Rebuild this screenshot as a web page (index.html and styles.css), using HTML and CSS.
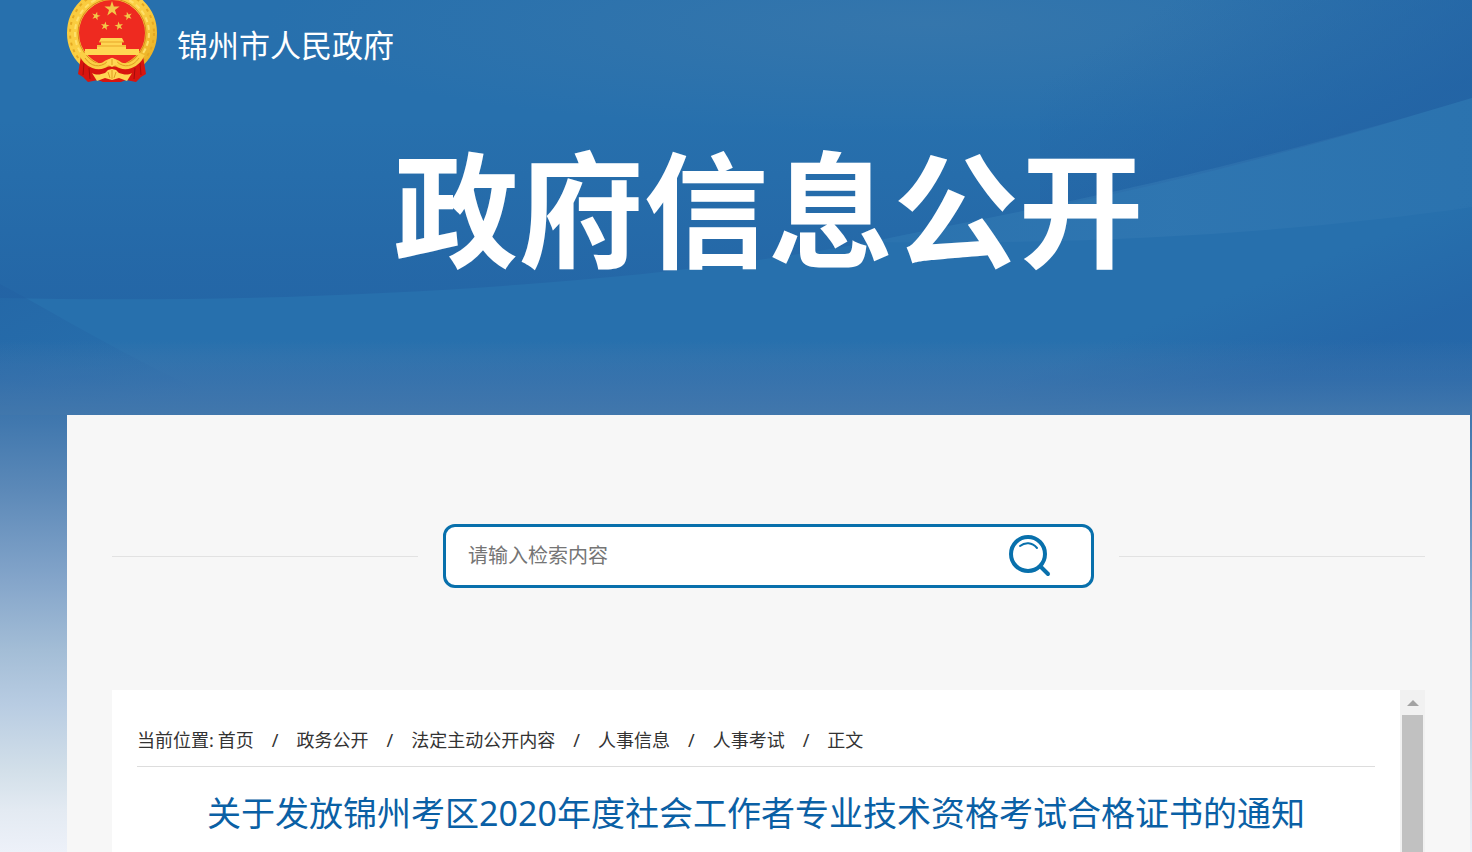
FILE: index.html
```html
<!DOCTYPE html>
<html lang="zh-CN">
<head>
<meta charset="utf-8">
<title>锦州市人民政府 - 政府信息公开</title>
<link rel="stylesheet" href="styles.css">
</head>
<body>

<!-- background waves -->
<svg class="waves" viewBox="0 0 1472 415" preserveAspectRatio="none" aria-hidden="true">
	<defs>
		<linearGradient id="upper" x1="0" y1="0" x2="0" y2="1">
			<stop offset="0.4" stop-color="#2260a2" stop-opacity="0"/>
			<stop offset="1" stop-color="#2260a2" stop-opacity="0.6"/>
		</linearGradient>
		<linearGradient id="corner" gradientUnits="userSpaceOnUse" x1="1170" y1="0" x2="1290" y2="190">
			<stop offset="0" stop-color="#2260a2" stop-opacity="0"/>
			<stop offset="1" stop-color="#2260a2" stop-opacity="0.7"/>
		</linearGradient>
		<radialGradient id="glow" cx="0.63" cy="0.1" r="0.45">
			<stop offset="0" stop-color="#3576ac"/>
			<stop offset="1" stop-color="#3576ac" stop-opacity="0"/>
		</radialGradient>
		<linearGradient id="band" x1="0" y1="0" x2="1" y2="0">
			<stop offset="0" stop-color="#3a7eb6" stop-opacity="0.2"/>
			<stop offset="0.5" stop-color="#3a7eb6" stop-opacity="0.4"/>
			<stop offset="1" stop-color="#3a7eb6" stop-opacity="0.2"/>
		</linearGradient>
		<linearGradient id="left" x1="0" y1="0" x2="1" y2="1">
			<stop offset="0" stop-color="#2260a2" stop-opacity="0.5"/>
			<stop offset="0.8" stop-color="#2260a2" stop-opacity="0"/>
		</linearGradient>
		<linearGradient id="right" gradientUnits="userSpaceOnUse" x1="1330" y1="255" x2="1365" y2="345">
			<stop offset="0" stop-color="#2361a5" stop-opacity="0"/>
			<stop offset="1" stop-color="#2361a5" stop-opacity="0.6"/>
		</linearGradient>
		<linearGradient id="mist" x1="0" y1="0" x2="0" y2="1">
			<stop offset="0" stop-color="#4177ac" stop-opacity="0"/>
			<stop offset="0.5" stop-color="#3a72ac" stop-opacity="0.5"/>
			<stop offset="1" stop-color="#4177ac"/>
		</linearGradient>
	</defs>
	<path fill="url(#upper)" d="M0 0H1472V98C1200 180 1000 215 870 242C640 285 300 305 0 298Z"/>
	<rect fill="url(#glow)" width="1472" height="240"/>
	<path fill="url(#corner)" d="M1040 0H1472V98C1300 150 1180 182 1040 209Z"/>
	<path fill="url(#band)" d="M1472 98C1200 180 1000 215 870 242C1100 245 1300 232 1472 207Z"/>
	<path fill="url(#left)" d="M0 284L26 298C100 340 180 385 260 415H0Z"/>
	<path fill="url(#right)" d="M1472 200V415H700V380Z"/>
	<rect fill="url(#mist)" y="340" width="1472" height="75"/>
</svg>

<div class="header">
	<svg class="emblem" viewBox="0 0 90 84" role="img" aria-label="国徽">
		<defs>
			<linearGradient id="gold" x1="0" y1="0" x2="1" y2="1">
				<stop offset="0" stop-color="#f9c93c"/>
				<stop offset="0.5" stop-color="#fbd045"/>
				<stop offset="1" stop-color="#e8ab20"/>
			</linearGradient>
			<path id="star" d="M0-10L2.3-3.1H9.5L3.7 1.2L5.9 8.1L0 3.8L-5.9 8.1L-3.7 1.2L-9.5-3.1H-2.3Z"/>
		</defs>
		<!-- wheat ring -->
		<circle cx="45" cy="33" r="39" fill="#ee2a20" stroke="url(#gold)" stroke-width="12"/>
		<circle cx="45" cy="33" r="42" fill="none" stroke="#e5a922" stroke-width="2" stroke-dasharray="3 4"/>
		<circle cx="45" cy="33" r="37" fill="none" stroke="#ffe069" stroke-width="2" stroke-dasharray="5 3"/>
		<circle cx="45" cy="33" r="34" fill="none" stroke="#d98c1d" stroke-width="1"/>
		<g fill="#f3c848">
			<use href="#star" transform="translate(45 9) scale(.8)"/>
			<use href="#star" transform="translate(29 16) rotate(15) scale(.45)"/>
			<use href="#star" transform="translate(61 16) rotate(-15) scale(.45)"/>
			<use href="#star" transform="translate(38 26) rotate(10) scale(.45)"/>
			<use href="#star" transform="translate(52 26) rotate(-10) scale(.45)"/>
		</g>
		<!-- gate -->
		<path fill="#ffd653" d="M34 38H55L57 42H55V45H59V49H72V55H18V49H30V45H34V42H32Z"/>
		<path stroke="#e8a52a" stroke-width="1" d="M32 42H57M30 46H59"/>
		<!-- ribbons -->
		<path fill="#d8150f" d="M14 56L11 74L16 77L21 82L31 80L36 82H54L59 80L69 82L74 77L79 74L76 56C70 66 60 70 54 68L45 66L36 68C30 70 20 66 14 56Z"/>
		<path fill="none" stroke="#a50d0b" stroke-width="1" d="M17 63L16 75M22 68L23 79M73 63L74 75M68 68L67 79"/>
		<!-- drapery and gear -->
		<path fill="none" stroke="#fbcf45" stroke-width="6" d="M15 54C20 65 32 70 40 63L45 61L50 63C58 70 70 65 75 54"/>
		<path fill="none" stroke="#e09c20" stroke-width="1" d="M18 58C24 67 33 68 40 62M72 58C66 67 57 68 50 62"/>
		<path fill="#ffd653" d="M25 73C30 76 34 74 38 73L41 70L45 69L49 70L52 73C56 74 60 76 65 73L60 81L52 78L45 80L38 78L30 81Z"/>
		<path fill="#ffd653" d="M39 64L41 60L45 58L49 60L51 64L45 67Z"/>
		<path fill="none" stroke="#e09c20" stroke-width="1" d="M45 59V65M45 70V79M41 72L43 78M49 72L47 78"/>
	</svg>
	<a href="#" class="site-name">锦州市人民政府</a>
</div>

<h1>政府信息公开</h1>

<div class="main">
	<form class="search">
		<span class="line"></span>
		<div class="search-box">
			<input type="text" id="keyword" placeholder="请输入检索内容" aria-label="请输入检索内容">
			<button type="button" aria-label="检索">
				<svg width="42" height="42" viewBox="0 0 42 42" fill="none" stroke="#0870ac" stroke-linecap="round">
					<circle cx="19" cy="19" r="17" stroke-width="4"/>
					<path stroke-width="4" d="M32 32L39 39"/>
					<path stroke-width="2" d="M11 11C16 7 23 7 28 13"/>
				</svg>
			</button>
		</div>
		<span class="line"></span>
	</form>

	<div class="article">
		<div class="content">
			<div class="location">
				<span class="here">当前位置:</span>
				<a href="#">首页</a><span>/</span>
				<a href="#">政务公开</a><span>/</span>
				<a href="#">法定主动公开内容</a><span>/</span>
				<a href="#">人事信息</a><span>/</span>
				<a href="#">人事考试</a><span>/</span>
				<a href="#">正文</a>
			</div>
			<h2>关于发放锦州考区2020年度社会工作者专业技术资格考试合格证书的通知</h2>
		</div>
		<div class="scrollbar">
			<div class="arrow"></div>
			<div class="thumb"></div>
		</div>
	</div>
</div>

</body>
</html>
```

FILE: styles.css
```css
* {
	box-sizing: border-box;
}
body {
	margin: 0;
	min-height: 100vh;
	display: flex;
	flex-direction: column;
	position: relative;
	font-family: "Noto Sans", "Noto Sans CJK SC", sans-serif;
	color: #333;
	background: linear-gradient(180deg, #2770ad 0px, #2770ad 340px, #3e76ad 415px, #5c89b8 490px, #84a5ca 580px, #a3bdd6 650px, #b8cce2 705px, #d2dfe9 770px, #e3eaf2 810px, #edf1f9 852px);
}
a {
	color: inherit;
	text-decoration: none;
}
.waves {
	position: absolute;
	top: 0;
	left: 0;
	width: 100%;
	height: 415px;
	z-index: -1;
}

.header {
	display: flex;
	align-items: flex-start;
	gap: 20px;
	height: 92px;
	padding-left: 67px;
}
.emblem {
	width: 90px;
	height: 84px;
}
.site-name {
	font-size: 31px;
	line-height: 90px;
	color: #fff;
}
h1 {
	margin: 0;
	height: 323px;
	padding-left: 65px;
	font-size: 125px;
	line-height: 236px;
	font-weight: bold;
	text-align: center;
	color: #fff;
}

.main {
	flex: 1;
	display: flex;
	flex-direction: column;
	margin: 0 2px 0 67px;
	padding: 109px 45px 0;
	background: #f7f7f7;
}
.search {
	display: flex;
	align-items: center;
	gap: 25px;
	margin-bottom: 102px;
}
.line {
	flex: 1;
	height: 1px;
	background: #e2e2e2;
}
.search-box {
	display: flex;
	align-items: center;
	width: 651px;
	height: 64px;
	padding: 0 40px 0 22px;
	border: 3px solid #0870ac;
	border-radius: 12px;
	background: #fff;
}
.search-box input {
	flex: 1;
	border: 0;
	padding: 0 0 2px;
	outline: none;
	background: none;
	font-family: inherit;
	font-size: 20px;
}
.search-box input::placeholder {
	color: #757575;
}
.search-box button {
	display: flex;
	border: 0;
	padding: 0;
	background: none;
	cursor: pointer;
}

.article {
	flex: 1;
	display: flex;
	background: #fff;
}
.content {
	flex: 1;
	padding: 25px 25px 0;
}
.location {
	display: flex;
	gap: 18px;
	height: 52px;
	border-bottom: 1px solid #ddd;
	font-size: 18px;
	line-height: 50px;
}
.here {
	margin-right: -14px;
}
h2 {
	margin: 0;
	padding-top: 20px;
	font-size: 34px;
	line-height: 52px;
	font-weight: normal;
	text-align: center;
	color: #0a60a5;
}
.scrollbar {
	display: flex;
	flex-direction: column;
	align-items: center;
	width: 25px;
	background: #f1f1f1;
}
.arrow {
	margin: 10px 0 9px;
	border: 6px solid transparent;
	border-top: 0;
	border-bottom-color: #a3a3a3;
}
.thumb {
	flex: 1;
	width: 21px;
	background: #c1c1c1;
}
```
